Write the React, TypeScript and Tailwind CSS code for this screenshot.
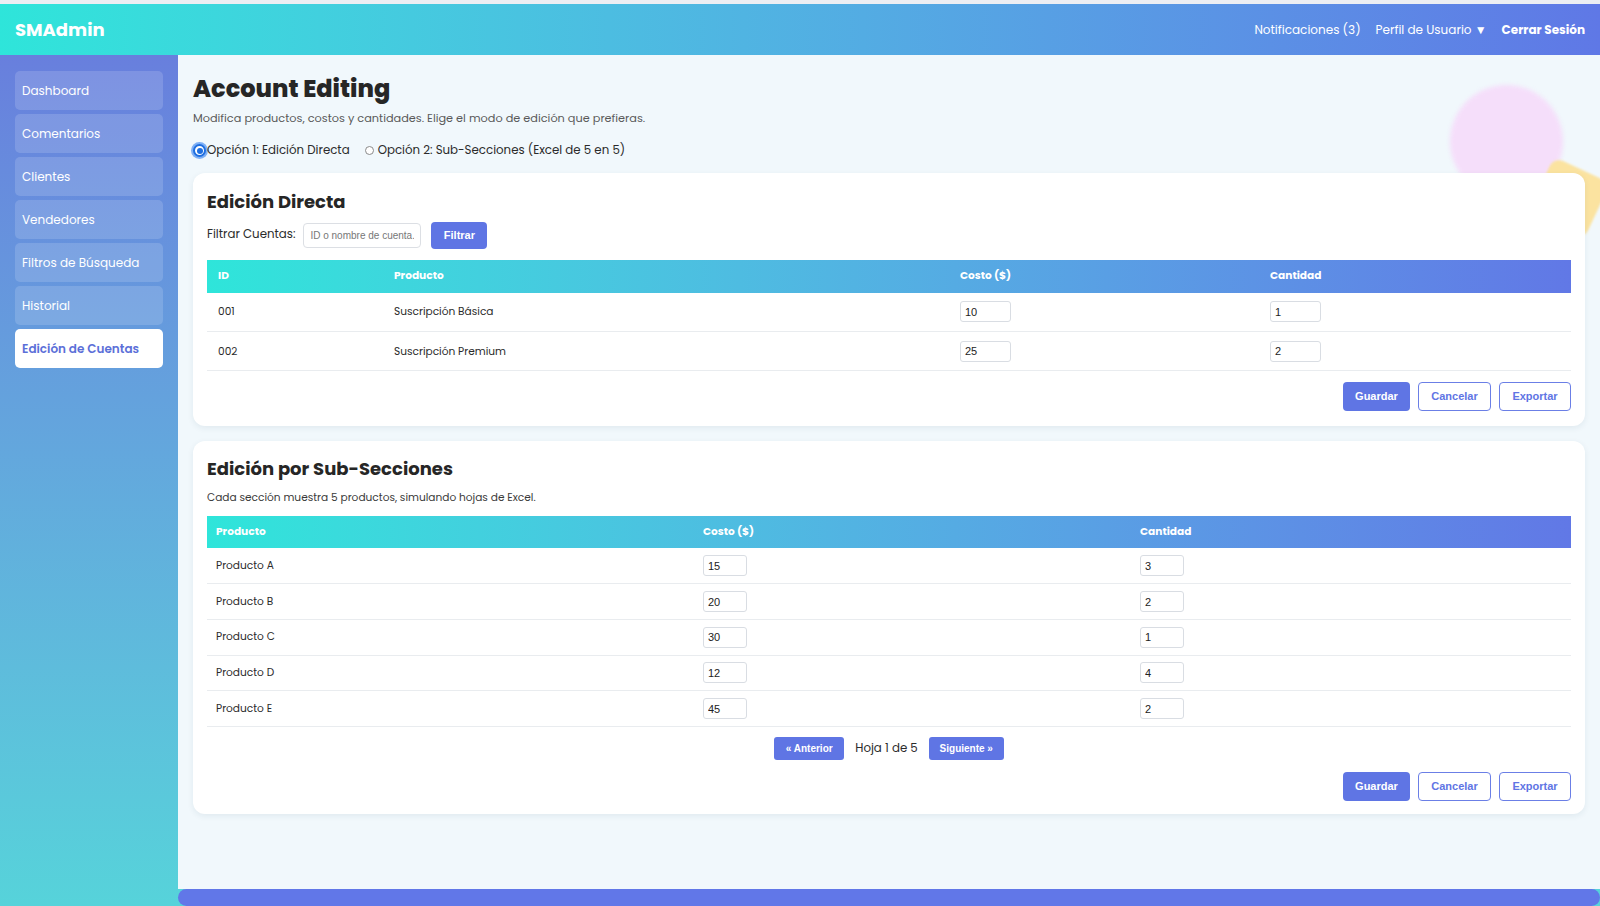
import React from "react";

const font = "font-['Poppins','Open_Sans','Noto_Sans',sans-serif]";

const navItems = [
    "Dashboard",
    "Comentarios",
    "Clientes",
    "Vendedores",
    "Filtros de Búsqueda",
    "Historial",
    "Edición de Cuentas",
];

const accounts = [
    { id: "001", name: "Suscripción Básica", cost: "10", qty: "1" },
    { id: "002", name: "Suscripción Premium", cost: "25", qty: "2" },
];

const products = [
    { name: "Producto A", cost: "15", qty: "3" },
    { name: "Producto B", cost: "20", qty: "2" },
    { name: "Producto C", cost: "30", qty: "1" },
    { name: "Producto D", cost: "12", qty: "4" },
    { name: "Producto E", cost: "45", qty: "2" },
];

function CellInput({ value, width }: { value: string; width: string }) {
    return (
        <input
            defaultValue={value}
            className={`${width} h-[21px] rounded-[3px] border border-[#d9dde3] bg-white px-[4px] font-['Liberation_Sans',Arial,sans-serif] text-[11px] text-[#222] outline-none`}
        />
    );
}

function ActionButtons() {
    return (
        <div className="flex justify-end gap-[8px] font-['Liberation_Sans',Arial,sans-serif] text-[11px] font-bold">
            <button className="h-[29px] w-[67px] rounded-[4px] bg-[#5f75e4] text-white">
                Guardar
            </button>
            <button className="h-[29px] w-[73px] rounded-[4px] border border-[#6b7fe6] bg-white text-[#5f75e4]">
                Cancelar
            </button>
            <button className="h-[29px] w-[72px] rounded-[4px] border border-[#6b7fe6] bg-white text-[#5f75e4]">
                Exportar
            </button>
        </div>
    );
}

export default function App() {
    return (
        <div className={`${font} flex h-[906px] flex-col overflow-hidden bg-[#56d3da] text-[#2b2b2b]`}>
            {/* Top strip */}
            <div className="h-[4px] bg-[#eceef3]" />

            {/* Header */}
            <header className="flex h-[51px] items-center justify-between bg-gradient-to-r from-[#2ee5da] to-[#5f78e6] px-[15px] text-white">
                <div className="text-[18px] font-bold">SMAdmin</div>
                <nav className="flex items-center gap-[15px] text-[12px]">
                    <span>Notificaciones (3)</span>
                    <span>Perfil de Usuario ▼</span>
                    <span className="font-bold">Cerrar Sesión</span>
                </nav>
            </header>

            <div className="flex flex-1">
                {/* Sidebar */}
                <aside className="flex w-[178px] flex-col gap-[4px] bg-gradient-to-b from-[#687fdd] to-[#56d3da] px-[15px] pt-[16px]">
                    {navItems.map((item) => {
                        const active = item === "Edición de Cuentas";
                        return (
                            <div
                                key={item}
                                className={
                                    active
                                        ? "flex h-[39px] items-center rounded-[5px] bg-white px-[7px] text-[12px] font-semibold text-[#5b6fd8]"
                                        : "flex h-[39px] items-center rounded-[5px] bg-white/15 px-[7px] text-[12px] text-white"
                                }
                            >
                                {item}
                            </div>
                        );
                    })}
                </aside>

                {/* Main column */}
                <div className="flex flex-1 flex-col">
                    <main className="relative flex-1 overflow-hidden bg-[#f1f8fc] px-[15px] pt-[14px]">
                        {/* Decorations */}
                        <div className="absolute left-[1272px] top-[30px] h-[113px] w-[113px] rounded-full bg-[#f5defa] blur-[2px]" />
                        <div className="absolute left-[1360px] top-[112px] h-[62px] w-[62px] rotate-[25deg] rounded-[10px] bg-[#fbe3a0] blur-[1px]" />

                        <div className="relative">
                            <h1 className="text-[24px] font-extrabold leading-[40px] text-[#262626]">
                                Account Editing
                            </h1>
                            <p className="mt-[1px] text-[11.3px] text-[#5a5a5a]">
                                Modifica productos, costos y cantidades. Elige el modo de edición que prefieras.
                            </p>

                            <div className="mt-[15px] flex items-center text-[11.8px] text-[#2b2b2b]">
                                <span className="flex h-[13px] w-[13px] items-center justify-center rounded-full border-[2px] border-[#1f6fe0] bg-white ring-2 ring-[#7fb0f5]">
                                    <span className="h-[6px] w-[6px] rounded-full bg-[#1f6fe0]" />
                                </span>
                                <span className="ml-[1px]">Opción 1: Edición Directa</span>
                                <span className="ml-[15px] h-[9px] w-[9px] rounded-full border border-[#8a8a8a] bg-white" />
                                <span className="ml-[4px]">Opción 2: Sub-Secciones (Excel de 5 en 5)</span>
                            </div>

                            {/* Card 1 */}
                            <section className="mt-[13px] rounded-[12px] bg-white px-[14px] pb-[15px] pt-[15px] shadow-[0_2px_6px_rgba(30,60,90,0.08)]">
                                <h2 className="text-[18px] font-bold leading-[28px] text-[#262626]">
                                    Edición Directa
                                </h2>
                                <div className="mt-[6px] flex items-center">
                                    <span className="text-[11.8px]">Filtrar Cuentas:</span>
                                    <input
                                        placeholder="ID o nombre de cuenta."
                                        className="ml-[8px] h-[25px] w-[118px] rounded-[4px] border border-[#dcdfe4] bg-white px-[6px] font-['Liberation_Sans',Arial,sans-serif] text-[10px] outline-none placeholder:text-[#777]"
                                    />
                                    <button className="ml-[10px] h-[27px] w-[56px] rounded-[4px] bg-[#5f75e4] font-['Liberation_Sans',Arial,sans-serif] text-[11px] font-bold text-white">
                                        Filtrar
                                    </button>
                                </div>

                                <table className="mt-[11px] w-full table-fixed border-collapse text-[10.6px]">
                                    <thead>
                                        <tr className="h-[33px] bg-gradient-to-r from-[#2ee5da] to-[#6178e6] text-left text-white">
                                            <th className="w-[176px] pl-[11px] font-bold">ID</th>
                                            <th className="w-[566px] pl-[11px] font-bold">Producto</th>
                                            <th className="w-[310px] pl-[11px] font-bold">Costo ($)</th>
                                            <th className="pl-[11px] font-bold">Cantidad</th>
                                        </tr>
                                    </thead>
                                    <tbody>
                                        {accounts.map((a) => (
                                            <tr key={a.id} className="h-[39px] border-b border-[#e9ecef]">
                                                <td className="pl-[11px] pt-[1px]">{a.id}</td>
                                                <td className="pl-[11px] pt-[1px]">{a.name}</td>
                                                <td className="pl-[11px]">
                                                    <CellInput value={a.cost} width="w-[51px]" />
                                                </td>
                                                <td className="pl-[11px]">
                                                    <CellInput value={a.qty} width="w-[51px]" />
                                                </td>
                                            </tr>
                                        ))}
                                    </tbody>
                                </table>

                                <div className="mt-[11px]">
                                    <ActionButtons />
                                </div>
                            </section>

                            {/* Card 2 */}
                            <section className="mt-[15px] rounded-[12px] bg-white px-[14px] pb-[13px] pt-[14px] shadow-[0_2px_6px_rgba(30,60,90,0.08)]">
                                <h2 className="text-[18px] font-bold leading-[28px] text-[#262626]">
                                    Edición por Sub-Secciones
                                </h2>
                                <p className="mt-[7px] text-[10.6px] text-[#3a3a3a]">
                                    Cada sección muestra 5 productos, simulando hojas de Excel.
                                </p>

                                <table className="mt-[10px] w-full table-fixed border-collapse text-[10.6px]">
                                    <thead>
                                        <tr className="h-[32px] bg-gradient-to-r from-[#2ee5da] to-[#6178e6] text-left text-white">
                                            <th className="w-[496px] pl-[9px] font-bold">Producto</th>
                                            <th className="w-[437px] font-bold">Costo ($)</th>
                                            <th className="font-bold">Cantidad</th>
                                        </tr>
                                    </thead>
                                    <tbody>
                                        {products.map((p) => (
                                            <tr key={p.name} className="h-[35.7px] border-b border-[#e9ecef]">
                                                <td className="pl-[9px]">{p.name}</td>
                                                <td>
                                                    <CellInput value={p.cost} width="w-[44px]" />
                                                </td>
                                                <td>
                                                    <CellInput value={p.qty} width="w-[44px]" />
                                                </td>
                                            </tr>
                                        ))}
                                    </tbody>
                                </table>

                                <div className="mt-[10px] flex items-center justify-center">
                                    <button className="h-[23px] w-[70px] rounded-[3px] bg-[#5f75e4] font-['Liberation_Sans',Arial,sans-serif] text-[10px] font-bold text-white">
                                        « Anterior
                                    </button>
                                    <span className="mx-[11px] text-[11.8px]">Hoja 1 de 5</span>
                                    <button className="h-[23px] w-[75px] rounded-[3px] bg-[#5f75e4] font-['Liberation_Sans',Arial,sans-serif] text-[10px] font-bold text-white">
                                        Siguiente »
                                    </button>
                                </div>

                                <div className="mt-[12px]">
                                    <ActionButtons />
                                </div>
                            </section>
                        </div>
                    </main>

                    {/* Footer bar */}
                    <div className="h-[17px] bg-[#56d3da]">
                        <div className="h-full rounded-full bg-[#6177e8]" />
                    </div>
                </div>
            </div>
        </div>
    );
}
